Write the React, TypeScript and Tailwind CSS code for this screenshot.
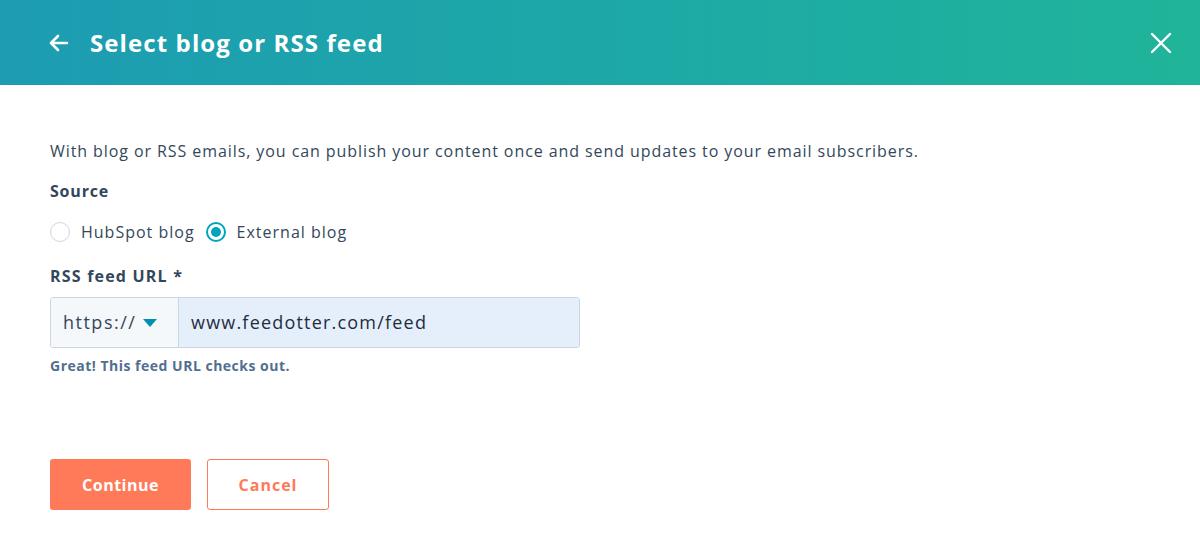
import React from "react";

export default function App() {
  return (
    <div className="w-[1200px] h-[539px] bg-white text-[#33475b]" style={{ fontFamily: '"Open Sans", "Liberation Sans", sans-serif' }}>
      <div className="h-[85px] flex items-center justify-between pl-[49px] pr-[28px] bg-gradient-to-r from-[#1d9cb2] to-[#20b49a]">
        <div className="flex items-center gap-[21px]">
          <svg width="20" height="18" viewBox="0 0 20 18" fill="none" stroke="white" strokeWidth="2.6" strokeLinecap="round" strokeLinejoin="round">
            <path d="M18 9H2M9 2L2 9l7 7" />
          </svg>
          <span className="text-white text-[24px] font-bold tracking-[1.1px]">Select blog or RSS feed</span>
        </div>
        <svg width="22" height="22" viewBox="0 0 22 22" stroke="white" strokeWidth="2.4" strokeLinecap="round">
          <path d="M2 2l18 18M20 2L2 20" />
        </svg>
      </div>
      <div className="px-[50px] pt-[54px]">
        <p className="text-[16px] leading-[24px] tracking-[0.92px]">With blog or RSS emails, you can publish your content once and send updates to your email subscribers.</p>
        <div className="mt-[17px] text-[16px] font-bold leading-[22px] tracking-[0.8px]">Source</div>
        <div className="mt-[19px] flex items-center text-[16px] leading-[22px] tracking-[1px]">
          <span className="w-[20px] h-[20px] rounded-full border border-[#cbd6e2] bg-white" />
          <span className="ml-[11px]">HubSpot blog</span>
          <span className="ml-[11px] w-[20px] h-[20px] rounded-full border-2 border-[#00a4bd] flex items-center justify-center">
            <span className="w-[10px] h-[10px] rounded-full bg-[#00a4bd]" />
          </span>
          <span className="ml-[11px]">External blog</span>
        </div>
        <div className="mt-[22px] text-[16px] font-bold leading-[22px] tracking-[1.2px]">RSS feed URL *</div>
        <div className="mt-[10px] flex w-[530px] h-[51px] border border-[#cbd6e2] rounded-[3px] overflow-hidden">
          <div className="w-[128px] bg-[#f5f8fa] border-r border-[#cbd6e2] flex items-center pl-[12px] gap-[7px] text-[18px] tracking-[1.5px]">
            <span>https://</span>
            <svg width="14" height="8" viewBox="0 0 14 8"><path d="M0 0h14L7 8z" fill="#0091ae" /></svg>
          </div>
          <div className="flex-1 bg-[#e5effb] flex items-center pl-[12px] text-[18px] text-[#1f2d3d] tracking-[1.2px]">www.feedotter.com/feed</div>
        </div>
        <div className="mt-[7px] text-[14px] font-bold text-[#516f90] tracking-[0.5px]">Great! This feed URL checks out.</div>
        <div className="mt-[83px] flex gap-[16px]">
          <button className="w-[141px] h-[51px] rounded-[3px] bg-[#ff7a59] text-white text-[16px] font-bold tracking-[0.5px]">Continue</button>
          <button className="w-[122px] h-[51px] rounded-[3px] border border-[#ff7a59] bg-white text-[#ff7a59] text-[16px] font-bold tracking-[1px]">Cancel</button>
        </div>
      </div>
    </div>
  );
}
